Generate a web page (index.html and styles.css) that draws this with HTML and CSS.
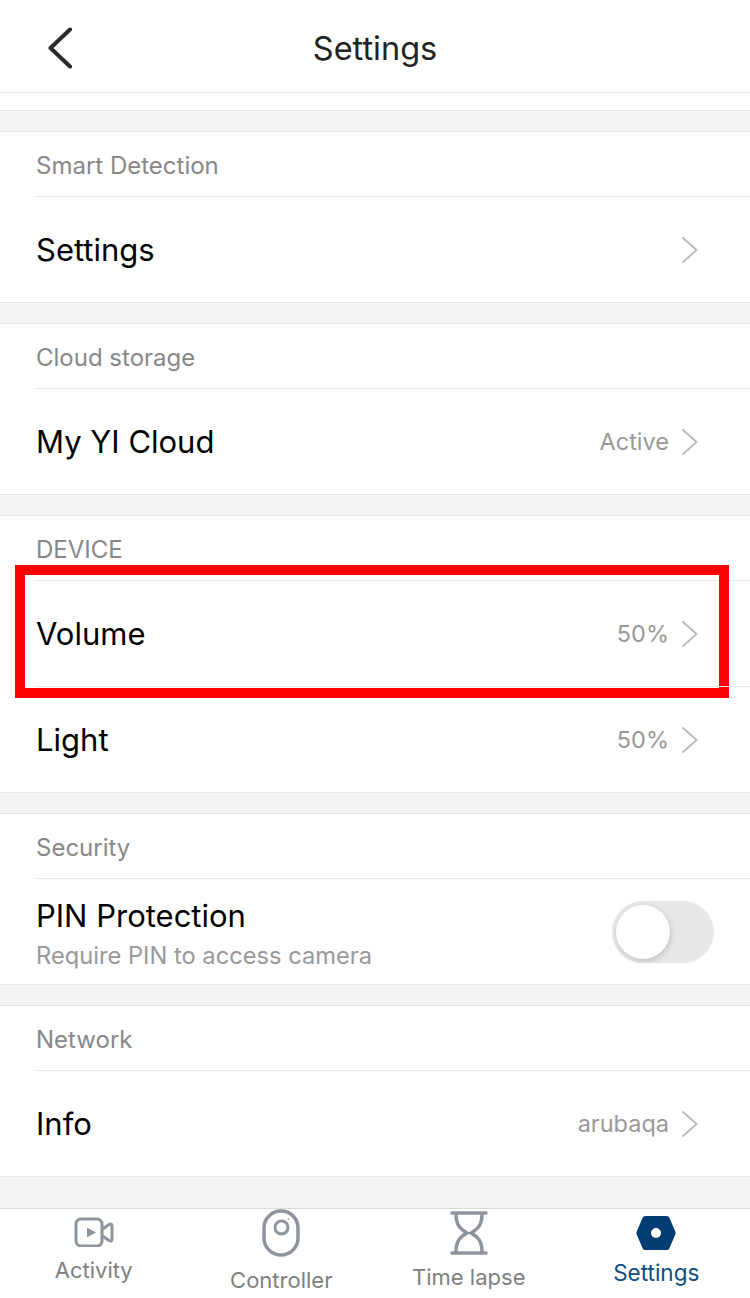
FILE: index.html
```html
<!DOCTYPE html>
<html lang="en">
<head>
<meta charset="utf-8">
<title>Settings</title>
<link rel="stylesheet" href="styles.css">
</head>
<body>
<div class="screen">
  <header class="topbar">
    <svg class="back" width="26" height="42" viewBox="0 0 26 42"><path d="M23 2.500 L3.500 21 L23 39.500" fill="none" stroke="#2b2b2b" stroke-width="4" stroke-linecap="round" stroke-linejoin="round"/></svg>
    <h1 class="title">Settings</h1>
  </header>
  <div class="spacer"></div>
  <main class="content">
    <section class="group">
      <div class="group-label">Smart Detection</div>
      <div class="row">
        <span class="row-name">Settings</span>
        <svg class="chev" width="17" height="28" viewBox="0 0 17 28"><path d="M1.500 1.500 L15.500 14 L1.500 26.500" fill="none" stroke="#bcbcbc" stroke-width="2"/></svg>
      </div>
    </section>
    <section class="group">
      <div class="group-label">Cloud storage</div>
      <div class="row">
        <span class="row-name">My YI Cloud</span>
        <span class="row-value">Active</span>
        <svg class="chev" width="17" height="28" viewBox="0 0 17 28"><path d="M1.500 1.500 L15.500 14 L1.500 26.500" fill="none" stroke="#bcbcbc" stroke-width="2"/></svg>
      </div>
    </section>
    <section class="group">
      <div class="group-label">DEVICE</div>
      <div class="row highlighted">
        <span class="row-name">Volume</span>
        <span class="row-value">50%</span>
        <svg class="chev" width="17" height="28" viewBox="0 0 17 28"><path d="M1.500 1.500 L15.500 14 L1.500 26.500" fill="none" stroke="#bcbcbc" stroke-width="2"/></svg>
        <div class="redbox"></div>
      </div>
      <div class="row">
        <span class="row-name">Light</span>
        <span class="row-value">50%</span>
        <svg class="chev" width="17" height="28" viewBox="0 0 17 28"><path d="M1.500 1.500 L15.500 14 L1.500 26.500" fill="none" stroke="#bcbcbc" stroke-width="2"/></svg>
      </div>
    </section>
    <section class="group">
      <div class="group-label">Security</div>
      <div class="row">
        <div class="row-stack">
          <span class="row-name">PIN Protection</span>
          <span class="row-sub">Require PIN to access camera</span>
        </div>
        <div class="toggle"><div class="knob"></div></div>
      </div>
    </section>
    <section class="group">
      <div class="group-label">Network</div>
      <div class="row">
        <span class="row-name">Info</span>
        <span class="row-value">arubaqa</span>
        <svg class="chev" width="17" height="28" viewBox="0 0 17 28"><path d="M1.500 1.500 L15.500 14 L1.500 26.500" fill="none" stroke="#bcbcbc" stroke-width="2"/></svg>
      </div>
    </section>
  </main>
  <nav class="tabbar">
    <div class="tab tab-activity">
      <svg width="40" height="30" viewBox="0 0 40 30"><rect x="2" y="2" width="26" height="27" rx="5" fill="none" stroke="#8e949e" stroke-width="3"/><path d="M13 10.500 L22 15.500 L13 20.500 Z" fill="#8e949e"/><path d="M28 12.500 L35 7.500 Q38 6 38 9 L38 22 Q38 25 35 23.500 L28 18.500" fill="none" stroke="#8e949e" stroke-width="3" stroke-linejoin="round"/></svg>
      <span class="tab-label">Activity</span>
    </div>
    <div class="tab tab-controller">
      <svg width="38" height="48" viewBox="0 0 38 48"><rect x="2" y="2" width="34" height="44" rx="17" fill="none" stroke="#8e949e" stroke-width="3.500"/><circle cx="19.500" cy="18.500" r="6.500" fill="none" stroke="#8e949e" stroke-width="3"/><circle cx="26.500" cy="10" r="1" fill="#b5b9c0"/></svg>
      <span class="tab-label">Controller</span>
    </div>
    <div class="tab tab-lapse">
      <svg width="38" height="44" viewBox="0 0 38 44"><path d="M2 2 H36 M2 42 H36" stroke="#8e949e" stroke-width="3.500" stroke-linecap="round"/><path d="M6 3 C6 14 10 18 17 22 C10 26 6 30 6 41 M32 3 C32 14 28 18 21 22 C28 26 32 30 32 41" fill="none" stroke="#8e949e" stroke-width="3.500"/></svg>
      <span class="tab-label">Time lapse</span>
    </div>
    <div class="tab tab-settings">
      <svg width="40" height="36" viewBox="0 0 40 36"><path fill-rule="evenodd" d="M9 1 H31 Q32.500 1 33.300 2.500 L39.300 16.500 Q40 18 39.300 19.500 L33.300 33.500 Q32.500 35 31 35 H9 Q7.500 35 6.700 33.500 L0.700 19.500 Q0 18 0.700 16.500 L6.700 2.500 Q7.500 1 9 1 Z M20 13 A5 5 0 1 0 20 23 A5 5 0 1 0 20 13 Z" fill="#033c73"/></svg>
      <span class="tab-label active">Settings</span>
    </div>
  </nav>
</div>
</body>
</html>
```
FILE: styles.css
```css
* { box-sizing: border-box; }
html, body { margin: 0; padding: 0; }
body { background: #fff; font-family: "Inter", "Liberation Sans", sans-serif; }
.screen { width: 750px; height: 1298px; display: flex; flex-direction: column; overflow: hidden; background: #fff; }

.topbar { height: 93px; flex: none; border-bottom: 1px solid #e6e6e6; position: relative; display: flex; align-items: center; justify-content: center; padding-top: 6px; }
.back { position: absolute; left: 47px; top: 27px; }
.title { margin: 0; font-size: 32.500px; font-weight: 400; color: #222; line-height: 1; }

.spacer { height: 17px; flex: none; background: #fff; }

.content { flex: 1; background: #f4f4f4; border-top: 1px solid #e6e6e6; padding-top: 20px; display: flex; flex-direction: column; gap: 20px; }

.group { background: #fff; border-top: 1px solid #e6e6e6; border-bottom: 1px solid #e6e6e6; padding-left: 36px; }
.group-label { height: 64px; display: flex; align-items: center; padding-top: 2px; font-size: 24px; color: #888; }
.row { height: 106px; border-top: 1px solid #e6e6e6; display: flex; align-items: center; padding-right: 52px; position: relative; }
.row-name { font-size: 31px; color: #000; line-height: 1.2; }
.row-value { margin-left: auto; font-size: 23.500px; color: #999; }
.row-name + .chev { margin-left: auto; }
.chev { flex: none; margin-left: 12px; }

.row-stack { display: flex; flex-direction: column; gap: 8px; padding-top: 4px; }
.row-sub { font-size: 23.700px; color: #999; line-height: 1.2; }
.toggle { position: absolute; right: 36px; top: 22px; width: 102px; height: 62px; border-radius: 31px; background: #e8e8ea; }
.knob { position: absolute; left: 4px; top: 4px; width: 54px; height: 54px; border-radius: 50%; background: #fff; box-shadow: 1px 2px 6px rgba(0,0,0,.18); }

.redbox { position: absolute; left: -21px; right: 21px; top: -16px; height: 133px; border: 10px solid #f00; }

.tabbar { height: 90px; flex: none; background: #fff; border-top: 1px solid #d9d9d9; display: grid; grid-template-columns: repeat(4, 1fr); }
.tab { display: flex; flex-direction: column; align-items: center; }
.tab svg { display: block; flex: none; }
.tab-label { font-size: 22px; color: #808080; line-height: 26px; }
.tab-label.active { color: #0f4c81; font-size: 22.500px; }
.tab-activity { padding-top: 8px; gap: 10px; }
.tab-controller { padding-top: 0; gap: 10px; }
.tab-lapse { padding-top: 2px; gap: 9px; }
.tab-settings { padding-top: 6px; gap: 9px; }
```
